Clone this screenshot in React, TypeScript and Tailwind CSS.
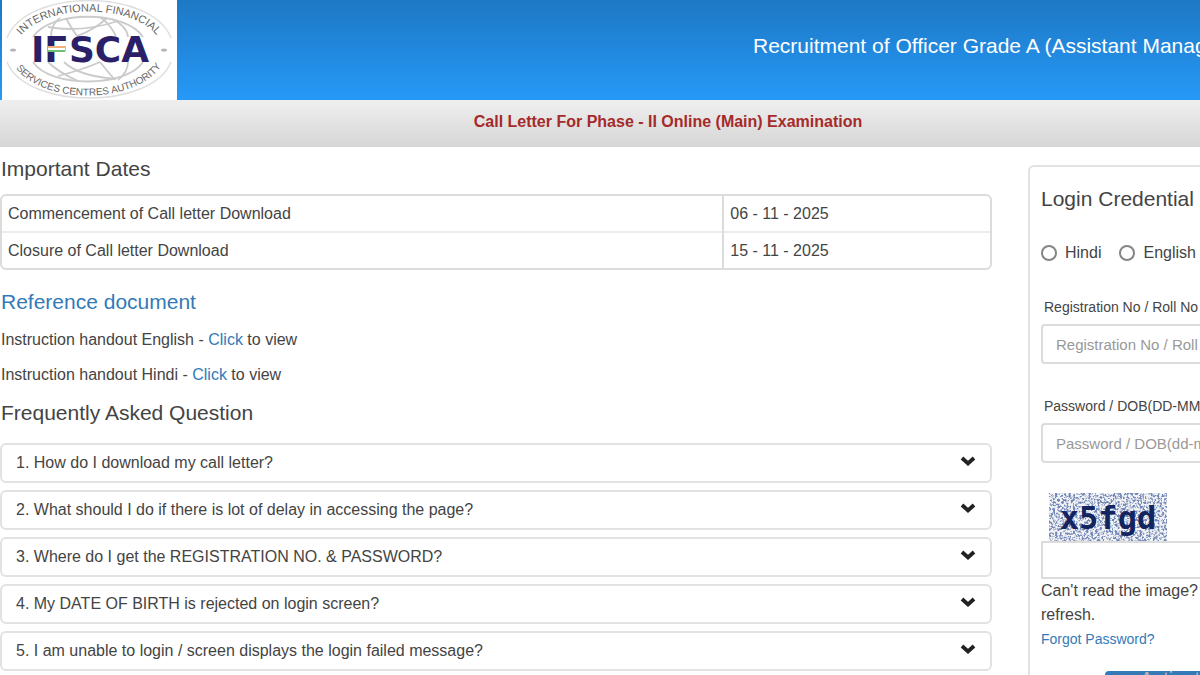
import React, { useState } from 'react';

interface ImportantDate {
  label: string;
  date: string;
}

const importantDates: ImportantDate[] = [
  { label: 'Commencement of Call letter Download', date: '06 - 11 - 2025' },
  { label: 'Closure of Call letter Download', date: '15 - 11 - 2025' },
];

const questions: string[] = [
  '1. How do I download my call letter?',
  '2. What should I do if there is lot of delay in accessing the page?',
  '3. Where do I get the REGISTRATION NO. & PASSWORD?',
  '4. My DATE OF BIRTH is rejected on login screen?',
  '5. I am unable to login / screen displays the login failed message?',
];

const Logo: React.FC = () => (
  <svg viewBox="0 0 175 100" className="block h-[100px] w-[175px] bg-white" role="img" aria-label="IFSCA">
    <defs>
      <path id="logo-top" d="M 16 40 C 38 2 136 2 158 40" />
      <path id="logo-bottom" d="M 10 62 C 34 107 140 107 163 60" />
    </defs>
    <g fill="none" stroke="#dedede" strokeWidth="1.4">
      <path d="M 5 38 C 24 -12 150 -12 169 38" />
      <path d="M 5 62 C 24 110 150 110 169 62" />
      <g stroke="#cbcbcb" strokeWidth="1.8">
        <path d="M 31 37 C 48 10 124 10 141 37" />
        <path d="M 31 62 C 48 88 124 88 141 62" />
        <path d="M 49 37 Q 49 24 58 18" />
        <path d="M 64 18 Q 68 26 75 36" />
        <path d="M 46 27 Q 80 33 116 21" />
        <path d="M 75 36 Q 92 30 105 18" />
        <path d="M 98 17 Q 108 24 114 36" />
        <path d="M 110 19 Q 125 26 126 37" />
        <path d="M 46 62 Q 56 72 76 81" />
        <path d="M 62 62 Q 76 76 114 79" />
        <path d="M 56 76 Q 80 70 98 62" />
        <path d="M 98 62 Q 106 72 113 80" />
        <path d="M 126 62 Q 126 72 116 80" />
      </g>
    </g>
    <g fill="#666" fontFamily="'Liberation Sans', sans-serif" fontSize="11" textAnchor="middle">
      <text>
        <textPath href="#logo-top" startOffset="50%">INTERNATIONAL FINANCIAL</textPath>
      </text>
      <text fontSize="10">
        <textPath href="#logo-bottom" startOffset="50%">SERVICES CENTRES AUTHORITY</textPath>
      </text>
    </g>
    <ellipse cx="11" cy="50" rx="3" ry="1.6" fill="#b5b5b5" />
    <ellipse cx="162" cy="50" rx="3" ry="1.6" fill="#b5b5b5" />
    <text
      x="88"
      y="62"
      textAnchor="middle"
      fill="#2b1f68"
      fontFamily="'DejaVu Sans', sans-serif"
      fontWeight="700"
      fontSize="36"
    >
      IFSCA
    </text>
    {/* tricolour bar on the arm of the F */}
    <path d="M46 47 H63" stroke="#f0b27a" strokeWidth="2" />
    <path d="M46 49 H63" stroke="#fff" strokeWidth="2" />
    <path d="M46 51 H63" stroke="#6cc070" strokeWidth="2" />
  </svg>
);

const Chevron: React.FC = () => (
  <svg viewBox="0 0 16 12" className="mb-1 h-3 w-4" aria-hidden="true">
    <path d="M2 3 L8 8.5 L14 3" fill="none" stroke="#222" strokeWidth="3.8" />
  </svg>
);

const Captcha: React.FC = () => (
  <svg viewBox="0 0 118 48" className="block h-12 w-[118px]" role="img" aria-label="Captcha">
    <filter id="speckle" x="0" y="0" width="100%" height="100%">
      <feTurbulence type="fractalNoise" baseFrequency="0.45" numOctaves="2" seed="4" />
      <feColorMatrix values="0 0 0 0 0.17  0 0 0 0 0.24  0 0 0 0 0.48  5 0 0 0 -2.2" />
    </filter>
    <rect width="118" height="48" fill="#f2f3f5" />
    <rect width="118" height="48" filter="url(#speckle)" />
    <text
      x="59"
      y="36"
      textAnchor="middle"
      fill="#14245f"
      fontFamily="'DejaVu Sans Mono', monospace"
      fontWeight="700"
      fontSize="32"
    >
      x5fgd
    </text>
  </svg>
);

const LoginPanel: React.FC = () => {
  const [language, setLanguage] = useState('');

  return (
    <aside className="mt-[18px] w-[172px] shrink-0 overflow-hidden whitespace-nowrap rounded-tl-md border-2 border-r-0 border-b-0 border-[#e2e2e2] pl-[11px]">
      <h2 className="mt-[18px] text-[21px] leading-7">Login Credential</h2>
      <div className="mt-7 flex items-center gap-[18px]">
        {['Hindi', 'English'].map((name) => (
          <label key={name} className="flex items-center gap-2 leading-6">
            <input
              type="radio"
              name="language"
              checked={language === name}
              onChange={() => setLanguage(name)}
              className="h-4 w-4 appearance-none rounded-full border-2 border-[#858585] bg-white checked:bg-[#337ab7]"
            />
            {name}
          </label>
        ))}
      </div>
      <label htmlFor="registration" className="mt-8 block pl-[3px] text-sm leading-5">
        Registration No / Roll No
      </label>
      <input
        id="registration"
        type="text"
        placeholder="Registration No / Roll"
        className="mt-[7px] block h-10 w-full rounded-l border-2 border-r-0 border-[#dcdcdc] pl-[13px] text-[15px] placeholder:text-[#999]"
      />
      <label htmlFor="password" className="mt-8 block pl-[3px] text-sm leading-5">
        Password / DOB(DD-MM
      </label>
      <input
        id="password"
        type="text"
        placeholder="Password / DOB(dd-m"
        className="mt-[7px] block h-10 w-full rounded-l border-2 border-r-0 border-[#dcdcdc] pl-[13px] text-[15px] placeholder:text-[#999]"
      />
      <div className="mt-[30px] pl-2">
        <Captcha />
      </div>
      <input
        type="text"
        aria-label="Captcha text"
        className="block h-[38px] w-full border-2 border-r-0 border-[#dcdcdc] pl-[13px] text-[15px]"
      />
      <p className="leading-6">
        Can't read the image?
        <br />
        refresh.
      </p>
      <a href="#forgot" className="block text-sm leading-6 text-[#337ab7]">
        Forgot Password?
      </a>
      <button
        type="button"
        aria-label="Login"
        className="mt-5 ml-16 block h-10 w-full rounded bg-[#337ab7]"
      ></button>
    </aside>
  );
};

const App: React.FC = () => {
  return (
    <div className="relative h-screen overflow-hidden bg-white font-['Liberation_Sans',Arial,sans-serif] text-base text-[#444]">
      <header className="flex h-[100px] items-center justify-between overflow-hidden bg-linear-to-b from-[#1d78c4] to-[#2699f8] pl-[2px]">
        <Logo />
        <h1 className="w-[447px] whitespace-nowrap pb-2 text-[21px] leading-7 text-white">
          Recruitment of Officer Grade A (Assistant Manag
        </h1>
      </header>

      <div className="flex h-[47px] justify-center bg-linear-to-b from-[#efefef] to-[#d6d6d6] pt-2.5 pl-[136px]">
        <p className="leading-6 font-bold text-[#a52a2a]">
          Call Letter For Phase - II Online (Main) Examination
        </p>
      </div>

      <div className="flex gap-9">
        <main className="min-w-0 flex-1">
          <h2 className="mt-2 pl-px text-[21px] leading-7">Important Dates</h2>
          <div className="mt-[11px] overflow-hidden rounded-md border-2 border-[#dcdcdc]">
            <table className="w-full border-collapse">
              <tbody>
                {importantDates.map((item) => (
                  <tr key={item.label} className="h-9 border-b-2 border-[#ececec] last:border-b-0">
                    <td className="w-[73%] pl-1.5">{item.label}</td>
                    <td className="border-l-2 border-[#dcdcdc] pl-1.5">{item.date}</td>
                  </tr>
                ))}
              </tbody>
            </table>
          </div>

          <h2 className="mt-[18px] pl-px text-[21px] leading-7 text-[#337ab7]">Reference document</h2>
          <p className="mt-3 pl-px leading-6">
            Instruction handout English - <a href="#english" className="text-[#337ab7]">Click</a> to view
          </p>
          <p className="mt-[11px] pl-px leading-6">
            Instruction handout Hindi - <a href="#hindi" className="text-[#337ab7]">Click</a> to view
          </p>

          <h2 className="mt-3 pl-px text-[21px] leading-7">Frequently Asked Question</h2>
          <div className="mt-4 flex flex-col gap-[7px]">
            {questions.map((question) => (
              <button
                key={question}
                type="button"
                className="flex h-10 items-center justify-between rounded-md border-2 border-[#e2e2e2] px-3.5 text-left"
              >
                <span>{question}</span>
                <Chevron />
              </button>
            ))}
          </div>
        </main>

        <LoginPanel />
      </div>

      {/* watermark over the bottom right corner */}
      <span className="pointer-events-none absolute right-0 -bottom-4 text-xl leading-6 text-[#b8b8b8]">
        Activat
      </span>
    </div>
  );
};

export default App;
